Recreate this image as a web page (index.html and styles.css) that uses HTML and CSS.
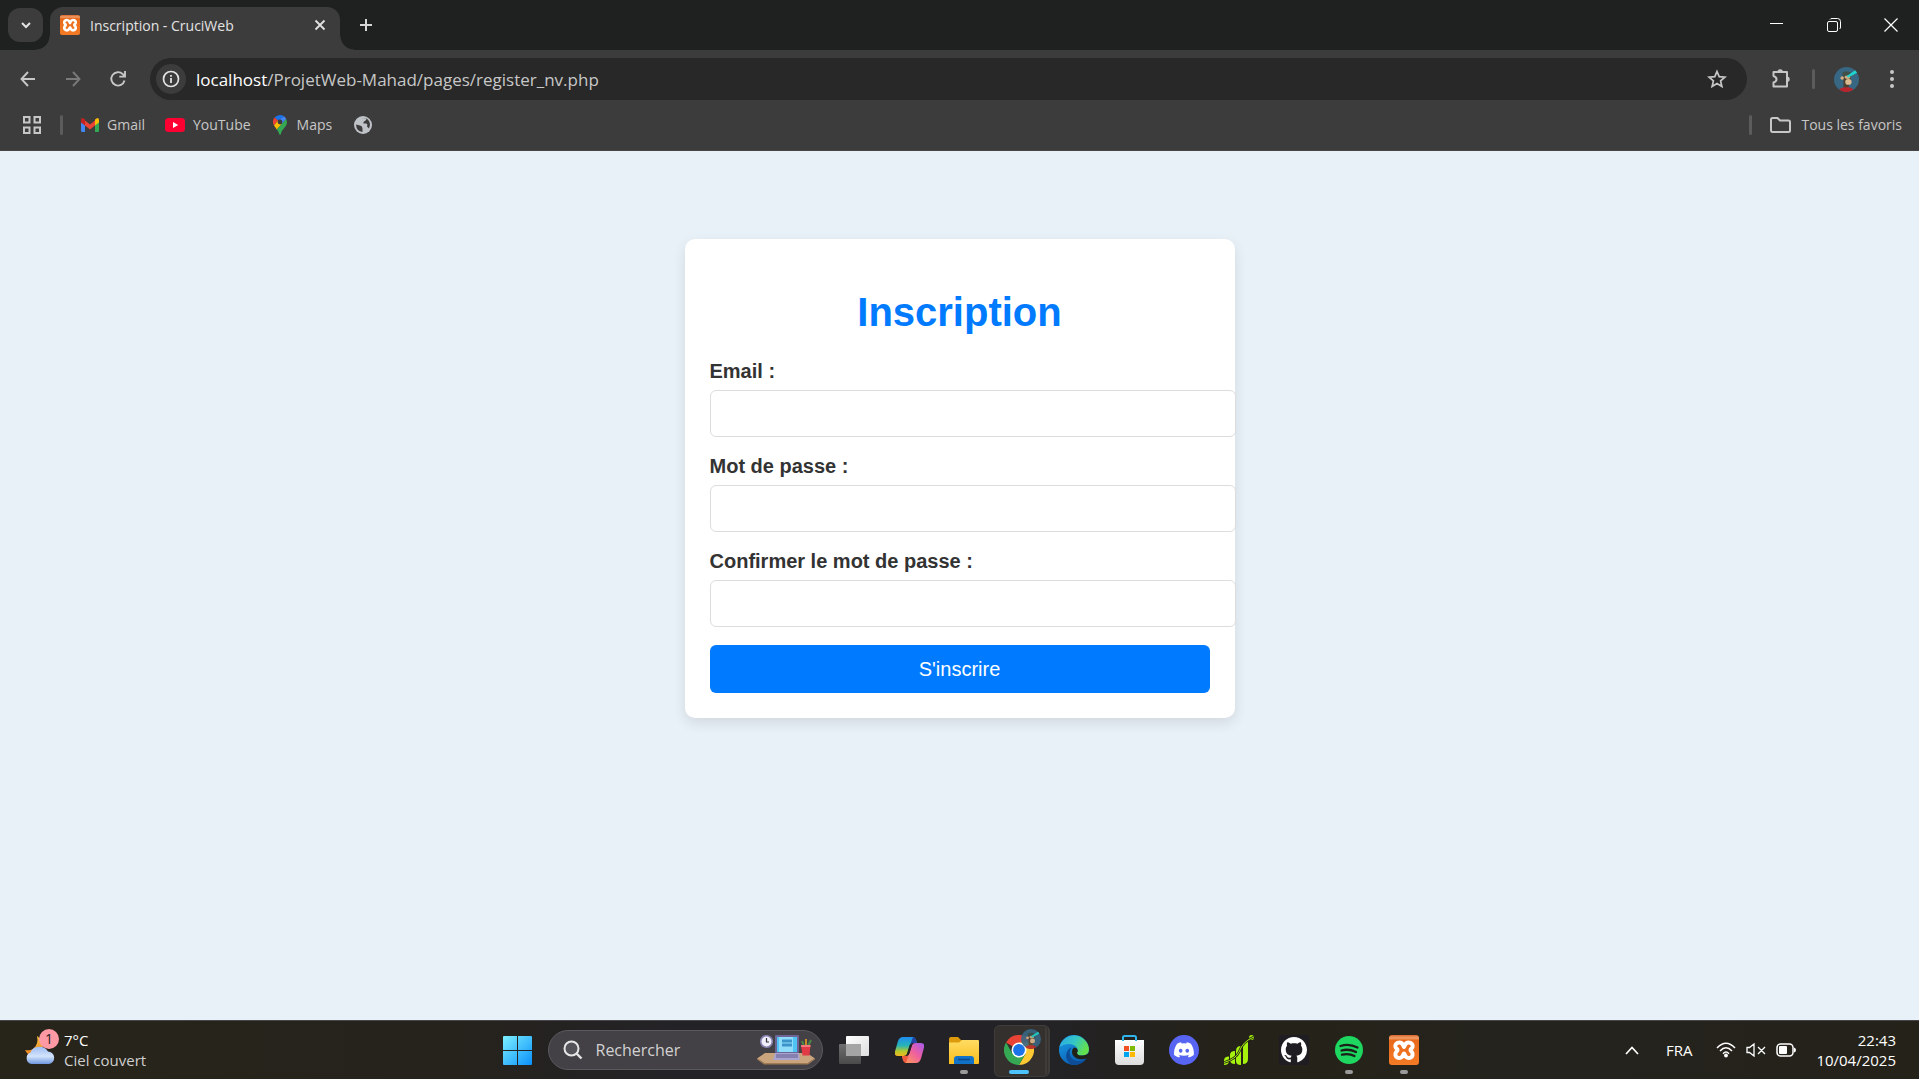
FILE: index.html
```html
<!DOCTYPE html>
<html lang="fr">
<head>
<meta charset="utf-8">
<title>Inscription - CruciWeb</title>
<link rel="stylesheet" href="styles.css">
</head>
<body>
<svg class="defs" aria-hidden="true">
  <defs>
    <linearGradient id="orange" x1="0" y1="0" x2="0" y2="1"><stop offset="0" stop-color="#d9662a"/><stop offset=".1" stop-color="#f0a06c"/><stop offset=".18" stop-color="#e8691b"/><stop offset="1" stop-color="#f47b25"/></linearGradient>
    <linearGradient id="win" x1="0" y1="0" x2="1" y2="1"><stop offset="0" stop-color="#7df0ff"/><stop offset="1" stop-color="#0a90fb"/></linearGradient>
    <linearGradient id="cloud" x1="0" y1="0" x2="0" y2="1"><stop offset="0" stop-color="#9dbdf3"/><stop offset=".55" stop-color="#d3e3fb"/><stop offset="1" stop-color="#6f97e0"/></linearGradient>
    <linearGradient id="moon" x1="0" y1="0" x2="0" y2="1"><stop offset="0" stop-color="#f5c542"/><stop offset="1" stop-color="#ef7d1c"/></linearGradient>
    <linearGradient id="copA" x1="0" y1="0" x2="0" y2="1"><stop offset="0" stop-color="#1f8df0"/><stop offset=".45" stop-color="#27b3b8"/><stop offset=".75" stop-color="#b5c92c"/><stop offset="1" stop-color="#f3b61f"/></linearGradient>
    <linearGradient id="copB" x1="1" y1="0" x2="0" y2="1"><stop offset="0" stop-color="#a45bf0"/><stop offset=".45" stop-color="#ee5fa0"/><stop offset="1" stop-color="#ffa34d"/></linearGradient>
    <linearGradient id="fold" x1="0" y1="0" x2="0" y2="1"><stop offset="0" stop-color="#ffdc62"/><stop offset="1" stop-color="#f9bd1d"/></linearGradient>
    <linearGradient id="edgeA" x1="0" y1="0" x2="1" y2=".4"><stop offset="0" stop-color="#2aa8ea"/><stop offset=".55" stop-color="#35c6c4"/><stop offset="1" stop-color="#63e04e"/></linearGradient>
    <linearGradient id="edgeB" x1="0" y1="0" x2=".5" y2="1"><stop offset="0" stop-color="#1ca2ea"/><stop offset="1" stop-color="#0a5fb4"/></linearGradient>
    <linearGradient id="bag" x1="0" y1="0" x2="0" y2="1"><stop offset="0" stop-color="#ffffff"/><stop offset="1" stop-color="#dcdcdc"/></linearGradient>
    <linearGradient id="pane" x1="0" y1="0" x2="1" y2="1"><stop offset="0" stop-color="#ffffff"/><stop offset="1" stop-color="#dedede"/></linearGradient>
    <linearGradient id="paneBack" x1="0" y1="0" x2="0" y2="1"><stop offset="0" stop-color="#6f6f70"/><stop offset="1" stop-color="#4a4a4b"/></linearGradient>
    <symbol id="xampp" viewBox="0 0 30 30">
      <rect width="30" height="30" rx="3" fill="url(#orange)"/>
      <path d="M15 12C14 10.500 14 7.500 10.500 7.500C7.500 7.500 6 9.500 6.500 12C7 14 8.500 13.500 8.500 15C8.500 16.500 7 16 6.500 18.500C6 21 7.500 23 10.500 23C14 23 14 19.500 15 18.500C16 19.500 16 23 19.500 23C22.500 23 24 21 23.500 18.500C23 16 21.500 16.500 21.500 15C21.500 13.500 23 14 23.500 12C24 9.500 22.500 7.500 19.500 7.500C16 7.500 16 10.500 15 12Z" fill="none" stroke="#fff" stroke-width="4" stroke-linejoin="round"/>
    </symbol>
    <symbol id="ape" viewBox="0 0 26 26">
      <circle cx="13" cy="13" r="13" fill="#386783"/>
      <path d="M5.500 23.500C8 20 18 20 20 23.500C16 27 9.500 27 5.500 23.500Z" fill="#b7242c"/>
      <path d="M9.500 9L10 21H15L18 9Z" fill="#4b4030"/>
      <circle cx="8.500" cy="11.500" r="1.800" fill="#d7b288"/>
      <ellipse cx="14" cy="10.500" rx="3" ry="2" fill="#cfae84"/>
      <ellipse cx="15" cy="15.500" rx="3.300" ry="3" fill="#dcba90"/>
      <path d="M8.500 6C11 4 16 4.500 18 6.500L17 8L9 9.500Z" fill="#3f5148"/>
      <path d="M13 9.500L22 3.500L24 6L15 11Z" fill="#1fd6cf"/>
    </symbol>
  </defs>
</svg>

<header class="browser">
  <div class="tabstrip">
    <button class="tab-search" aria-label="Rechercher dans les onglets"><svg width="12" height="12" viewBox="0 0 12 12"><path d="M2 4L6 8L10 4" fill="none" stroke="#e3e3e3" stroke-width="2"/></svg></button>
    <div class="tab">
      <svg width="20" height="20"><use href="#xampp"/></svg>
      <span class="tab-title">Inscription - CruciWeb</span>
      <button class="bare" aria-label="Fermer l'onglet"><svg width="12" height="12" viewBox="0 0 12 12"><path d="M1.500 1.500L10.500 10.500M10.500 1.500L1.500 10.500" stroke="#e3e3e3" stroke-width="1.800"/></svg></button>
    </div>
    <button class="bare new-tab" aria-label="Nouvel onglet"><svg width="14" height="14" viewBox="0 0 14 14"><path d="M7 1V13M1 7H13" stroke="#d6d6d6" stroke-width="2"/></svg></button>
    <div class="window-controls">
      <button class="bare" aria-label="Réduire"><svg width="14" height="14" viewBox="0 0 14 14"><path d="M0 5.500H13" stroke="#fff"/></svg></button>
      <button class="bare" aria-label="Restaurer"><svg width="14" height="14" viewBox="0 0 14 14"><rect x=".5" y="3.500" width="10" height="10" rx="1.500" fill="none" stroke="#fff"/><path d="M3 1.500Q3.500 .5 5 .5H10.500Q13.500 .5 13.500 3.500V9Q13.500 10.500 12.500 11" fill="none" stroke="#fff"/></svg></button>
      <button class="bare" aria-label="Fermer"><svg width="14" height="14" viewBox="0 0 14 14"><path d="M.5 .5L13.500 13.500M13.500 .5L.5 13.500" stroke="#fff" stroke-width="1.200"/></svg></button>
    </div>
  </div>

  <div class="toolbar">
    <nav class="nav-buttons">
      <button class="bare" aria-label="Précédent"><svg width="20" height="20" viewBox="0 0 20 20"><path d="M17 10H4M10 3L3.500 10L10 17" fill="none" stroke="#c7c7c7" stroke-width="1.900"/></svg></button>
      <button class="bare" aria-label="Suivant"><svg width="20" height="20" viewBox="0 0 20 20"><path d="M3 10H16M10 3L16.500 10L10 17" fill="none" stroke="#7a7a7a" stroke-width="1.900"/></svg></button>
      <button class="bare" aria-label="Actualiser"><svg width="20" height="20" viewBox="0 0 20 20"><path d="M16.500 11.500A6.700 6.700 0 1 1 14.800 5.200L17 7.500M17 2V7.600H11.300" fill="none" stroke="#c7c7c7" stroke-width="1.900"/></svg></button>
    </nav>
    <div class="omnibox">
      <button class="site-info" aria-label="Informations sur le site"><svg width="18" height="18" viewBox="0 0 18 18"><circle cx="9" cy="9" r="7.500" fill="none" stroke="#e3e3e3" stroke-width="1.700"/><path d="M9 8V13M9 5V6.800" stroke="#e3e3e3" stroke-width="1.800"/></svg></button>
      <span class="url"><b>localhost</b>/ProjetWeb-Mahad/pages/register_nv.php</span>
      <button class="bare" aria-label="Ajouter aux favoris"><svg width="20" height="20" viewBox="0 0 20 20"><path d="M10 2.500L12.200 7.700L17.900 8.200L13.600 11.900L14.900 17.500L10 14.500L5.100 17.500L6.400 11.900L2.100 8.200L7.800 7.700Z" fill="none" stroke="#c7c7c7" stroke-width="1.700"/></svg></button>
    </div>
    <div class="toolbar-end">
      <button class="bare" aria-label="Extensions"><svg width="22" height="22" viewBox="0 0 22 22"><path d="M3.500 4H17V18.500H3.500V14.500Q6.500 13.500 6.500 11.200Q6.500 9 3.500 8Z" fill="none" stroke="#c7c7c7" stroke-width="2" stroke-linejoin="round"/><path d="M7.500 4A2.700 2.700 0 0 1 12.900 4ZM17 8.500A2.700 2.700 0 0 1 17 13.900Z" fill="#c7c7c7"/></svg></button>
      <span class="divider"></span>
      <button class="bare avatar" aria-label="Profil"><svg width="25" height="25"><use href="#ape"/></svg></button>
      <button class="bare" aria-label="Menu"><svg width="18" height="18" viewBox="0 0 18 18" fill="#c7c7c7"><circle cx="9" cy="2" r="2"/><circle cx="9" cy="9" r="2"/><circle cx="9" cy="16" r="2"/></svg></button>
    </div>
  </div>

  <nav class="bookmarks">
    <a class="bookmark" href="#" aria-label="Applications"><svg width="18" height="18" viewBox="0 0 18 18" fill="none" stroke="#c7c7c7" stroke-width="2"><path d="M1 1H6.500V6.500H1ZM11.500 1H17V6.500H11.500ZM1 11.500H6.500V17H1ZM11.500 11.500H17V17H11.500Z"/></svg></a>
    <span class="divider"></span>
    <a class="bookmark" href="#"><svg width="18" height="14" viewBox="0 0 18 14"><path d="M0 2V12.800Q0 14 1.200 14H4V6Z" fill="#4285f4"/><path d="M18 2V12.800Q18 14 16.800 14H14V6Z" fill="#34a853"/><path d="M4 2.500L9 6.500L14 2.500V7.500L9 11.500L4 7.500Z" fill="#ea4335"/><path d="M0 2Q0 0 1.500 0Q2.300 0 4 1.600V7.500L0 4.400Z" fill="#c5221f"/><path d="M18 2Q18 0 16.500 0Q15.700 0 14 1.600V7.500L18 4.400Z" fill="#fbbc04"/></svg>Gmail</a>
    <a class="bookmark" href="#"><svg width="20" height="14" viewBox="0 0 20 14"><rect width="20" height="14" rx="3.500" fill="#ff0033"/><path d="M8 4L13.200 7L8 10Z" fill="#fff"/></svg>YouTube</a>
    <a class="bookmark maps" href="#"><svg width="14" height="20" viewBox="0 0 14 20"><path d="M7 0A7 7 0 0 0 1.600 2.500L5 5.500L11 1.300A7 7 0 0 0 7 0Z" fill="#1a73e8"/><path d="M1.600 2.500A7 7 0 0 0 1 10.500L5 5.500Z" fill="#ea4335"/><path d="M11 1.300L5 5.500L9 8.800L13.200 4A7 7 0 0 0 11 1.300Z" fill="#4285f4"/><path d="M1 10.500L5 5.500L9 8.800L3.800 14.500Z" fill="#fbbc04"/><path d="M13.200 4L3.800 14.500Q5.500 16.500 6.300 19.300Q7 20.500 7.700 19.300Q8.500 15.500 12 12Q15.200 8.500 13.200 4Z" fill="#34a853"/><circle cx="7" cy="7" r="2.400" fill="#3c3c3c"/></svg>Maps</a>
    <a class="bookmark" href="#" aria-label="Site"><svg width="18" height="18" viewBox="0 0 18 18"><circle cx="9" cy="9" r="9" fill="#bfc2c7"/><path d="M2 8.500L6 9.500Q8.500 10 8.500 12.500L8.500 16Q2.500 15.500 2 8.500ZM7 2.200H12.500Q12.500 5 10.500 5.200Q9 5.500 9.500 7.500H12.500Q14 8.500 13 10.500L15 12.500L16 9Q16 4.500 12.500 2.500" fill="#3c3c3c"/></svg></a>
    <span class="spacer"></span>
    <span class="divider"></span>
    <a class="bookmark all" href="#"><svg width="21" height="16" viewBox="0 0 21 16"><path d="M1 13V2.500Q1 1 2.500 1H7.500L10 3.500H18.500Q20 3.500 20 5V13.500Q20 15 18.500 15H2.500Q1 15 1 13Z" fill="none" stroke="#c7c7c7" stroke-width="2"/></svg>Tous les favoris</a>
  </nav>
</header>

<main class="page">
  <form class="card">
    <h1>Inscription</h1>
    <div class="field"><label for="email">Email :</label><input type="email" id="email"></div>
    <div class="field"><label for="password">Mot de passe :</label><input type="password" id="password"></div>
    <div class="field"><label for="confirm">Confirmer le mot de passe :</label><input type="password" id="confirm"></div>
    <button type="button" class="submit">S'inscrire</button>
  </form>
</main>

<footer class="taskbar">
  <button class="bare weather">
    <span class="weather-icon">
      <svg width="30" height="28" viewBox="0 0 30 28"><path d="M12 0Q14 8 8 13Q5 15 0 14Q4 22 12 19Q20 14 17 4Z" fill="url(#moon)"/><path d="M6.500 28A6 6 0 0 1 5.500 16.500A9.500 8.500 0 0 1 23 15.500A6.300 6.300 0 0 1 24 28Z" fill="url(#cloud)"/></svg>
      <span class="badge">1</span>
    </span>
    <span class="weather-text"><span>7°C</span><span class="muted">Ciel couvert</span></span>
  </button>

  <nav class="apps">
    <button class="app" aria-label="Démarrer"><svg width="29" height="29" viewBox="0 0 29 29"><path d="M0 1Q0 0 1 0H14V14H0ZM15 0H28Q29 0 29 1V14H15ZM0 15H14V29H1Q0 29 0 28ZM15 15H29V28Q29 29 28 29H15Z" fill="url(#win)"/></svg></button>
    <label class="search">
      <svg width="20" height="20" viewBox="0 0 20 20"><circle cx="8.500" cy="8.500" r="7" fill="#55535a" stroke="#e6e6e6" stroke-width="2"/><path d="M13.500 13.500L18.500 18.500" stroke="#e6e6e6" stroke-width="2.400"/></svg>
      <input type="search" placeholder="Rechercher" aria-label="Rechercher">
      <svg width="58" height="30" viewBox="0 0 58 30"><path d="M8 18H50L58 23.500L51 28H7L0 23.500Z" fill="#c9a47c"/><path d="M0 23.500L7 28H51L58 23.500V24.500L51 29.500H7L0 24.500Z" fill="#a07a55"/><rect x="18" y="0" width="24" height="18" rx="1" fill="#6c6596"/><rect x="20" y="2" width="20" height="15" fill="#4fc3f4"/><rect x="22" y="2" width="14" height="15" fill="#8edcfa"/><path d="M25 6H35M25 10H35" stroke="#3b93ca" stroke-width="3"/><path d="M18 18H42L43 25H16Z" fill="#aaa5cf"/><path d="M19 20H41M19 22H41" stroke="#625c92"/><circle cx="9.500" cy="6.500" r="5.800" fill="#f0eefa" stroke="#8680ae" stroke-width="1.600"/><path d="M9.500 3V7H12" fill="none" stroke="#333" stroke-width="1.200"/><path d="M47 11L45 6M49 11L49 4M51 11L54 5" stroke="#4b8a45" stroke-width="2"/><path d="M49 11V4" stroke="#c98a28" stroke-width="2"/><path d="M44 10H53.500L52.500 20.500H45.500Z" fill="#e03a46"/><path d="M44 10H53.500V12H44Z" fill="#f5767c"/></svg>
    </label>
    <button class="app" aria-label="Vue des tâches"><svg width="30" height="28" viewBox="0 0 30 28"><rect x="0" y="8" width="22" height="20" rx="1" fill="url(#paneBack)"/><rect x="7" y="0" width="23" height="20" rx="1" fill="url(#pane)"/><rect x="7" y="8" width="15" height="12" fill="#a5a5a5"/></svg></button>
    <button class="app" aria-label="Copilot"><svg width="29" height="26" viewBox="0 0 29 26"><path d="M8 0H18Q20 0 21 3L22 6H18Q15.500 6 14.500 9L12 17Q11 19 8.500 19H3Q-1 19 0 14.500L3 4Q4.500 0 8 0Z" fill="url(#copA)"/><path d="M18 0Q20 0 21 3L22 6H18Q16 6 15 8Z" fill="#2343a5"/><path d="M21 26H11Q9 26 8 23L7 19H11Q13.500 19 14.500 16L17 8Q18 6 20.500 6H26Q30 6 29 10.500L26 21.500Q24.500 26 21 26Z" fill="url(#copB)"/><path d="M11 26Q9 26 8 23L7 19H11Q13 19 14 17Z" fill="#f0583f"/><path d="M14.500 8.500Q15.500 6 18 6H18.500Q17.300 7 17 8L14.500 16Q13.500 19 11 19H10.500Q11.500 18.300 12 17Z" fill="#232226"/></svg></button>
    <button class="app running" aria-label="Explorateur de fichiers"><svg width="30" height="27" viewBox="0 0 30 27"><path d="M0 2Q0 0 2 0H9L12 3H13V10H0Z" fill="#dc9a0c"/><path d="M0 5.500H10L13 3H29Q30 3 30 4V26Q30 27 29 27H0Z" fill="url(#fold)"/><path d="M5 27V22Q5 19 8 19H22Q25 19 25 22V27Z" fill="#1272c8"/><path d="M9 22.500H21" stroke="#0a4b8f" stroke-width="1.500"/></svg></button>
    <button class="app active" aria-label="Google Chrome"><svg width="30" height="30" viewBox="0 0 48 48"><path d="M24 24L3.200 12A24 24 0 0 1 44.800 12Z" fill="#ea4335"/><path d="M24 12H44.800A24 24 0 0 1 24 48L34.400 30Z" fill="#fcc934"/><path d="M3.200 12A24 24 0 0 0 24 48L34.400 30H13.600Z" fill="#34a853"/><circle cx="24" cy="24" r="12" fill="#fff"/><circle cx="24" cy="24" r="9.500" fill="#1a73e8"/></svg><svg class="app-avatar" width="20" height="20"><use href="#ape"/></svg></button>
    <button class="app" aria-label="Microsoft Edge"><svg width="30" height="30" viewBox="0 0 30 30"><circle cx="15" cy="15" r="15" fill="url(#edgeB)"/><path d="M.5 12A15 15 0 0 1 30 14Q30 20.500 23 20.500Q17.500 20.500 18 17.500Q20 13 15.500 10.500Q8 7 .5 12Z" fill="url(#edgeA)"/><path d="M12.500 12.500Q8.500 18 13 23.500Q19 29 27.500 23.500A15 15 0 0 1 12 29.700Q4 23 9 15Q10.500 13 12.500 12.500Z" fill="#0d4d97"/><path d="M18 13.500Q19.500 15.500 18 18Q18.500 21 24 20.500Q29 20 30 17V21L27.500 23.500Q19 26 14.500 21Q11 16 15 12.500Z" fill="#222117"/></svg></button>
    <button class="app" aria-label="Microsoft Store"><svg width="29" height="30" viewBox="0 0 29 30"><path d="M0 5H29V26Q29 30 25 30H4Q0 30 0 26Z" fill="url(#bag)"/><path d="M9 11H14V16H9Z" fill="#f25022"/><path d="M15 11H20V16H15Z" fill="#7fba00"/><path d="M9 17H14V22H9Z" fill="#00a4ef"/><path d="M15 17H20V22H15Z" fill="#ffb900"/><path d="M8 6V2.500Q8 1 9.500 1H19.500Q21 1 21 2.500V6" fill="none" stroke="#2fb4ee" stroke-width="2"/></svg></button>
    <button class="app" aria-label="Discord"><svg width="30" height="30" viewBox="0 0 30 30"><circle cx="15" cy="15" r="15" fill="#5865f2"/><path transform="translate(5 5) scale(.83)" fill="#fff" d="M20.317 4.370a19.791 19.791 0 0 0-4.885-1.515.074.074 0 0 0-.079.037c-.21.375-.444.864-.608 1.250a18.270 18.270 0 0 0-5.487 0 12.640 12.640 0 0 0-.617-1.250.077.077 0 0 0-.079-.037A19.736 19.736 0 0 0 3.677 4.370a.07.07 0 0 0-.032.027C.533 9.046-.32 13.580.099 18.057a.082.082 0 0 0 .031.057 19.900 19.900 0 0 0 5.993 3.030.078.078 0 0 0 .084-.028 14.090 14.090 0 0 0 1.226-1.994.076.076 0 0 0-.041-.106 13.107 13.107 0 0 1-1.872-.892.077.077 0 0 1-.008-.128c.126-.094.252-.192.372-.292a.074.074 0 0 1 .077-.01c3.928 1.793 8.180 1.793 12.062 0a.074.074 0 0 1 .078.01c.12.098.246.198.373.292a.077.077 0 0 1-.006.127 12.299 12.299 0 0 1-1.873.892.077.077 0 0 0-.041.107c.36.698.772 1.362 1.225 1.993a.076.076 0 0 0 .084.028 19.839 19.839 0 0 0 6.002-3.030.077.077 0 0 0 .032-.054c.5-5.177-.838-9.674-3.549-13.660a.061.061 0 0 0-.031-.03zM8.020 15.330c-1.183 0-2.157-1.085-2.157-2.419 0-1.333.956-2.419 2.157-2.419 1.210 0 2.176 1.096 2.157 2.420 0 1.333-.956 2.418-2.157 2.418zm7.975 0c-1.183 0-2.157-1.085-2.157-2.419 0-1.333.955-2.419 2.157-2.419 1.210 0 2.176 1.096 2.157 2.420 0 1.333-.946 2.418-2.157 2.418z"/></svg></button>
    <button class="app" aria-label="Croissance"><svg width="30" height="30" viewBox="0 0 30 30"><path d="M0 25.500Q0 21.500 5 21.500V26Q5 30 0 30ZM6 20Q6 16 11 16V29Q6 29 6 25ZM12 16Q12 11 17 11V30Q12 30 12 26ZM19 12Q19 7 24 7V24Q24 29 19 29Z" fill="#a6f20c"/><circle cx="27.500" cy="2.500" r="2.500" fill="#a6f20c"/><path d="M0 27.500Q12 24 15 17Q19 6 30 2" fill="none" stroke="#24231a" stroke-width="2.400"/><path d="M0 27.500Q12 24 15 17Q19 6 30 2" fill="none" stroke="#a6f20c"/></svg></button>
    <button class="app" aria-label="GitHub"><svg width="30" height="30" viewBox="0 0 30 30"><rect width="30" height="30" fill="#1f1c22"/><path transform="translate(2 2) scale(1.625)" fill="#fff" d="M8 0C3.580 0 0 3.580 0 8c0 3.540 2.290 6.530 5.470 7.590.4.070.55-.17.55-.38 0-.19-.01-.82-.01-1.490-2.010.37-2.530-.49-2.690-.94-.09-.23-.48-.94-.82-1.130-.28-.15-.68-.52-.01-.53.63-.01 1.080.58 1.230.82.72 1.210 1.870.87 2.330.66.07-.52.28-.87.51-1.070-1.780-.2-3.640-.89-3.640-3.950 0-.87.31-1.590.82-2.150-.08-.2-.36-1.020.08-2.120 0 0 .67-.21 2.200.82.64-.18 1.320-.27 2-.27s1.360.09 2 .27c1.530-1.040 2.200-.82 2.200-.82.44 1.100.16 1.920.08 2.120.51.56.82 1.270.82 2.150 0 3.070-1.870 3.750-3.650 3.950.29.25.54.73.54 1.480 0 1.070-.01 1.930-.01 2.200 0 .21.15.46.55.38A8.013 8.013 0 0 0 16 8c0-4.420-3.580-8-8-8z"/></svg></button>
    <button class="app running" aria-label="Spotify"><svg width="28" height="28" viewBox="0 0 28 28"><circle cx="14" cy="14" r="14" fill="#1ed760"/><path d="M5.500 10Q14 7 22.500 11.500M6.500 14.500Q14 12.500 21 16M7 18.700Q14 17 19.500 20" fill="none" stroke="#1b1f1a" stroke-width="2.300" stroke-linecap="round"/></svg></button>
    <button class="app running" aria-label="XAMPP"><svg width="30" height="30"><use href="#xampp"/></svg></button>
  </nav>

  <div class="tray">
    <button class="bare" aria-label="Icônes cachées"><svg width="14" height="9" viewBox="0 0 14 9"><path d="M1 8L7 1.500L13 8" fill="none" stroke="#fff" stroke-width="1.700"/></svg></button>
    <button class="bare lang">FRA</button>
    <button class="bare status" aria-label="Réseau, son et batterie">
      <svg width="20" height="16" viewBox="0 0 20 16"><path d="M1 6Q10 -3.500 19 6M4 9Q10 2.500 16 9M7 11.700Q10 8.500 13 11.700" fill="none" stroke="#fff" stroke-width="1.500"/><circle cx="10" cy="13.500" r="1.900" fill="#fff"/></svg>
      <svg width="20" height="14" viewBox="0 0 20 14"><path d="M1 4.500H3.500L8 1V13L3.500 9.500H1ZM12 4L19 11M19 4L12 11" fill="none" stroke="#fff" stroke-width="1.300"/></svg>
      <svg width="20" height="14" viewBox="0 0 20 14"><rect x="1" y="1" width="16" height="12" rx="3.500" fill="none" stroke="#fff" stroke-width="1.500"/><rect x="3" y="3" width="8" height="8" rx="1" fill="#fff"/><path d="M18 4.500Q20 5 20 7Q20 9 18 9.500Z" fill="#fff"/></svg>
    </button>
    <button class="bare clock"><span>22:43</span><span>10/04/2025</span></button>
  </div>
</footer>
</body>
</html>
```
FILE: styles.css
```css
* { box-sizing: border-box; }

body {
  margin: 0;
  min-height: 100vh;
  display: flex;
  flex-direction: column;
  font-family: "Open Sans", "Noto Sans", sans-serif;
  font-size: 14px;
  background: #e9f1f8;
}

svg { display: block; flex: none; }
.defs { position: absolute; width: 0; height: 0; }
button { font: inherit; cursor: pointer; }

.bare {
  display: flex;
  align-items: center;
  justify-content: center;
  padding: 0;
  border: 0;
  background: none;
  color: inherit;
}

/* Browser frame */
.browser {
  background: #3c3c3c;
  border-bottom: 1px solid #4a4545;
  color: #c7c7c7;
}

.tabstrip {
  display: flex;
  height: 50px;
  padding-left: 8px;
  background: #1f2120;
}

.tab-search {
  display: flex;
  align-items: center;
  justify-content: center;
  width: 35px;
  height: 34px;
  margin: 8px 7px 0 0;
  padding: 0;
  border: 0;
  border-radius: 12px;
  background: #3c3c3c;
}

.tab {
  position: relative;
  display: flex;
  align-items: center;
  gap: 10px;
  width: 290px;
  margin-top: 7px;
  padding: 0 14px 7px 10px;
  border-radius: 13px 13px 0 0;
  background: #3c3c3c;
  color: #e3e3e3;
}

.tab::before,
.tab::after {
  content: "";
  position: absolute;
  bottom: 0;
  width: 14px;
  height: 14px;
}
.tab::before { right: 100%; background: radial-gradient(circle at 0 0, transparent 13px, #3c3c3c 14px); }
.tab::after { left: 100%; background: radial-gradient(circle at 100% 0, transparent 13px, #3c3c3c 14px); }

.tab-title { flex: 1; }
.new-tab { width: 52px; }
.window-controls { display: flex; margin-left: auto; }
.window-controls .bare { width: 57px; }

.toolbar {
  display: flex;
  align-items: center;
  height: 58px;
  padding: 0 4px 0 5px;
}
.nav-buttons { display: flex; width: 145px; }
.nav-buttons .bare { width: 45px; height: 45px; }

.omnibox {
  flex: 1;
  display: flex;
  align-items: center;
  height: 42px;
  padding: 0 20px 0 6px;
  border-radius: 21px;
  background: #282828;
}
.site-info {
  display: flex;
  align-items: center;
  justify-content: center;
  width: 30px;
  height: 30px;
  padding: 0;
  border: 0;
  border-radius: 50%;
  background: #3c3c3c;
}
.url { flex: 1; margin-left: 10px; font-size: 17px; }
.url b { font-weight: 400; color: #fff; }

.toolbar-end { display: flex; align-items: center; width: 168px; padding-left: 23px; }
.toolbar-end .divider { margin-left: 20px; }
.avatar { margin: 0 24px 0 19px; }

.divider { width: 3px; height: 20px; border-radius: 2px; background: #5c5c5c; }

.bookmarks {
  display: flex;
  align-items: center;
  height: 42px;
  padding: 0 17px 9px 23px;
}
.bookmark {
  display: flex;
  align-items: center;
  gap: 8px;
  margin-right: 20px;
  color: inherit;
  text-decoration: none;
}
.bookmarks .divider { margin: 0 18px 0 -1px; }
.bookmark.maps { gap: 10px; margin: 0 22px 0 2px; }
.bookmark.all { gap: 10px; margin-right: 0; }
.spacer { flex: 1; }

/* Registration form */
.page {
  flex: 1;
  padding: 88px 20px;
  font-family: "Liberation Sans", Arial, sans-serif;
  font-size: 20px;
  line-height: 23px;
  color: #333;
}
.card {
  max-width: 550px;
  margin: 0 auto;
  padding: 25px;
  border-radius: 10px;
  background: #fff;
  box-shadow: 0 5px 13px rgba(0, 0, 0, .1);
}
.card h1 {
  margin: 25px 0;
  font-size: 40px;
  line-height: 46px;
  text-align: center;
  color: #007bff;
}
.field { margin-bottom: 18px; }
.field label { display: block; margin-bottom: 7px; font-weight: 700; }
.field input {
  display: block;
  box-sizing: content-box;
  width: 100%;
  height: 21px;
  padding: 12px;
  border: 1px solid #ddd;
  border-radius: 6px;
  background: #fff;
  font: inherit;
}
.submit {
  display: block;
  width: 100%;
  padding: 12px;
  border: 0;
  border-radius: 6px;
  background: #007bff;
  color: #fff;
  line-height: 24px;
}

/* Taskbar */
.taskbar {
  display: grid;
  grid-template-columns: 1fr auto 1fr;
  align-items: center;
  height: 59px;
  border-top: 1px solid #47464a;
  background: linear-gradient(90deg, #27241a, #26231d 24%, #232226 35%, #232226 54%, #242219 63%, #252319 69%, #24231e 80%, #242219);
  color: #fff;
  font-size: 15px;
}
.weather { justify-self: start; gap: 9px; padding-left: 25px; }
.weather-icon { position: relative; }
.badge {
  position: absolute;
  top: -7px;
  left: 14px;
  width: 20px;
  height: 20px;
  border-radius: 50%;
  background: #ff99a4;
  color: #222;
  font-size: 14px;
  line-height: 20px;
  text-align: center;
}
.weather-text, .clock { display: flex; flex-direction: column; line-height: 20px; }
.weather-text { align-items: flex-start; }
.muted { color: #cfcfcf; }

.apps { display: flex; align-items: center; padding-left: 2px; }
.app {
  position: relative;
  display: flex;
  align-items: center;
  justify-content: center;
  width: 55px;
  height: 58px;
  padding: 0;
  border: 0;
  background: none;
}
.app svg { position: relative; }
.app.running::after,
.app.active::after {
  content: "";
  position: absolute;
  bottom: 5px;
  width: 8px;
  height: 4px;
  border-radius: 2px;
  background: #9a9a9a;
}
.app.active::after { width: 20px; background: #4cc2ff; }
.app.active::before {
  content: "";
  position: absolute;
  top: 4px;
  left: 2px;
  width: 50px;
  height: 50px;
  border: 1px solid #3f3c3a;
  border-right: 5px double #3f3c3a;
  border-radius: 6px;
  background: #33302e;
}
.app .app-avatar { position: absolute; top: 8px; left: 29px; opacity: .9; }

.search {
  display: flex;
  align-items: center;
  gap: 13px;
  width: 275px;
  height: 40px;
  margin: 0 4px 0 3px;
  padding: 0 7px 0 14px;
  border: 1px solid #5b595e;
  border-radius: 20px;
  background: #434145;
}
.search input {
  flex: 1;
  min-width: 0;
  padding: 0;
  border: 0;
  outline: 0;
  background: none;
  color: #fff;
  font: inherit;
  font-size: 16px;
}
.search input::placeholder { color: #d2d2d2; }

.tray { display: flex; align-items: center; justify-content: flex-end; padding-right: 23px; }
.lang { margin: 0 24px 0 27px; }
.status { gap: 10px; }
.clock { align-items: flex-end; margin-left: 20px; }
```
